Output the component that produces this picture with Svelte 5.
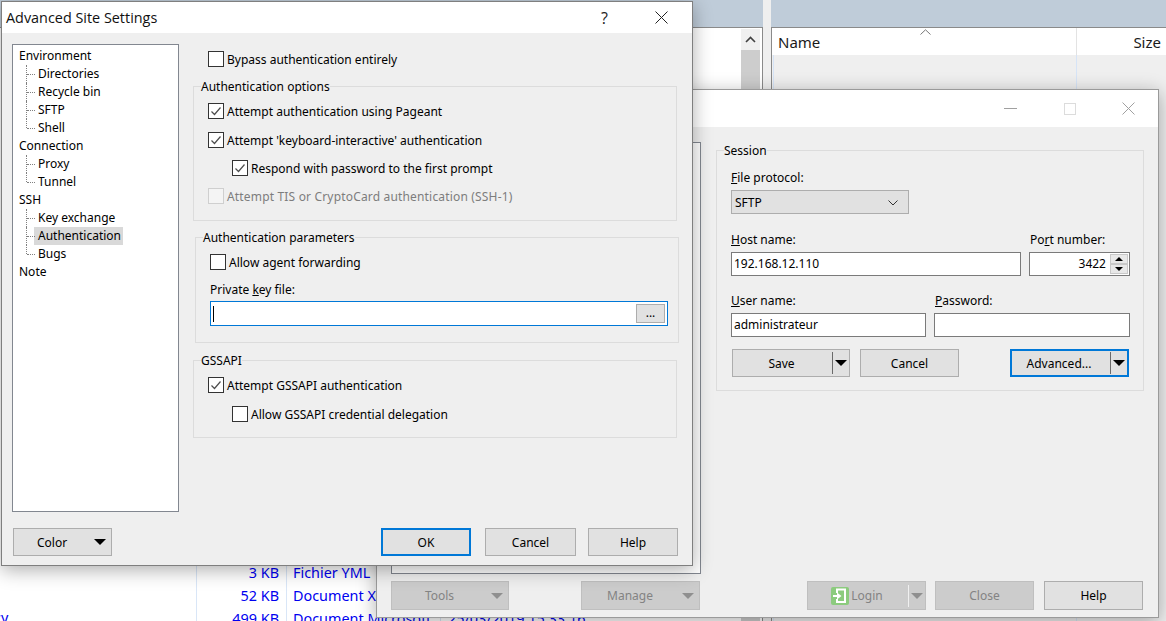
<script>
  const tree = [
    { name: 'Environment', kids: ['Directories', 'Recycle bin', 'SFTP', 'Shell'] },
    { name: 'Connection', kids: ['Proxy', 'Tunnel'] },
    { name: 'SSH', kids: ['Key exchange', 'Authentication', 'Bugs'] },
    { name: 'Note', kids: [] }
  ];

  const files = [
    { size: '3 KB', type: 'Fichier YML', date: '' },
    { size: '52 KB', type: 'Document XML', date: '' },
    { size: '499 KB', type: 'Document Microsoft', date: '25/03/2019 15:33:16' }
  ];
</script>

{#snippet check(label, on = false, cls = '')}
  <div class="check {cls}">
    <span class="box">
      {#if on}
        <svg width="14" height="14" viewBox="0 0 14 14"><path d="M2.5 7.5 L5.5 10.5 L11.5 3.5" fill="none" stroke="#4d4d4d" stroke-width="1.2" /></svg>
      {/if}
    </span>
    <span>{label}</span>
  </div>
{/snippet}

<div class="desktop">
  <div class="pane left-pane">
    <div class="band"></div>
    <div class="scrollbar">
      <div class="scroll-up">
        <svg width="11" height="7" viewBox="0 0 11 7"><path d="M1 6 L5.5 1.5 L10 6" fill="none" stroke="#404040" stroke-width="1.6" /></svg>
      </div>
      <div class="scroll-thumb"></div>
    </div>
    <div class="files">
      {#each files as f}
        <div class="file">
          <span class="file-size">{f.size}</span>
          <span class="file-type">{f.type}</span>
          <span class="file-date">{f.date}</span>
        </div>
      {/each}
    </div>
    <span class="stray">cy</span>
  </div>

  <div class="pane right-pane">
    <div class="band"></div>
    <div class="list-head">
      <span class="col-name">Name</span>
      <svg class="sort" width="11" height="6" viewBox="0 0 11 6"><path d="M0.5 5.5 L5.5 0.8 L10.5 5.5" fill="none" stroke="#777" /></svg>
      <span class="col-size">Size</span>
    </div>
    <div class="list-body"></div>
  </div>

  <!-- login window, sits behind the settings dialog -->
  <section class="window login">
    <header class="titlebar login-bar">
      <svg width="13" height="2" viewBox="0 0 13 2"><rect width="13" height="1" fill="#a0a0a0" /></svg>
      <svg width="12" height="12" viewBox="0 0 12 12"><rect x="0.5" y="0.5" width="11" height="11" fill="none" stroke="#dcdcdc" /></svg>
      <svg width="13" height="13" viewBox="0 0 13 13"><path d="M0.5 0.5 L12.5 12.5 M12.5 0.5 L0.5 12.5" stroke="#a0a0a0" /></svg>
    </header>
    <div class="login-body">
      <div class="login-main">
        <div class="site-tree"></div>
        <fieldset class="group session">
          <legend>Session</legend>
          <label class="field">
            <span><u>F</u>ile protocol:</span>
            <div class="select">
              SFTP
              <svg width="10" height="6" viewBox="0 0 10 6"><path d="M0.5 0.5 L5 5 L9.5 0.5" fill="none" stroke="#333" /></svg>
            </div>
          </label>
          <div class="field-row host-row">
            <label class="field host">
              <span><u>H</u>ost name:</span>
              <div class="input">192.168.12.110</div>
            </label>
            <label class="field port">
              <span class="nudge">Po<u>r</u>t number:</span>
              <div class="input port-input">
                3422
                <div class="spin">
                  <span><i class="tri up"></i></span>
                  <span><i class="tri down"></i></span>
                </div>
              </div>
            </label>
          </div>
          <div class="field-row user-row">
            <label class="field user">
              <span><u>U</u>ser name:</span>
              <div class="input">administrateur</div>
            </label>
            <label class="field pass">
              <span class="nudge"><u>P</u>assword:</span>
              <div class="input"></div>
            </label>
          </div>
          <div class="session-actions">
            <button class="btn split save"><span class="split-label">Save</span><i class="split-sep"></i><i class="tri"></i></button>
            <button class="btn session-cancel">Cancel</button>
            <button class="btn split advanced focus"><span class="split-label">Advanced...</span><i class="split-sep"></i><i class="tri"></i></button>
          </div>
        </fieldset>
      </div>
      <div class="login-actions">
        <button class="btn off tools"><span class="split-label">Tools</span><i class="tri"></i></button>
        <button class="btn off manage"><span class="split-label">Manage</span><i class="tri"></i></button>
        <button class="btn off split do-login">
          <span class="split-label login-label">
            <svg width="18" height="18" viewBox="0 0 18 18">
              <rect width="18" height="18" rx="2" fill="#8ccb7e" />
              <path d="M5 1.5 H15 V16 H5 V12 H7 V14 H13 V3.5 H7 V6 H5 Z" fill="#fff" />
              <path d="M2 8 H6 V5.5 L10.5 9 L6 12.5 V10 H2 Z" fill="#fff" />
            </svg>
            Login
          </span>
          <i class="split-sep light"></i><i class="tri"></i>
        </button>
        <button class="btn off close">Close</button>
        <button class="btn help">Help</button>
      </div>
    </div>
  </section>

  <section class="window settings">
    <header class="titlebar">
      <h1>Advanced Site Settings</h1>
      <span class="help-mark">?</span>
      <svg width="13" height="13" viewBox="0 0 13 13"><path d="M0.5 0.5 L12.5 12.5 M12.5 0.5 L0.5 12.5" stroke="#222" /></svg>
    </header>
    <div class="settings-body">
      <div class="settings-main">
        <nav class="tree">
          {#each tree as node}
            <div class="root">{node.name}</div>
            {#each node.kids as kid, i}
              <div class="kid" class:last={i === node.kids.length - 1}>
                <span class:selected={kid === 'Authentication'}>{kid}</span>
              </div>
            {/each}
          {/each}
        </nav>
        <div class="panel">
          {@render check('Bypass authentication entirely', false, 'bypass')}
          <fieldset class="group options">
            <legend>Authentication options</legend>
            {@render check('Attempt authentication using Pageant', true, 'first')}
            {@render check("Attempt 'keyboard-interactive' authentication", true)}
            {@render check('Respond with password to the first prompt', true, 'sub')}
            {@render check('Attempt TIS or CryptoCard authentication (SSH-1)', false, 'disabled')}
          </fieldset>
          <fieldset class="group params">
            <legend>Authentication parameters</legend>
            {@render check('Allow agent forwarding')}
            <div class="key-label">Private <u>k</u>ey file:</div>
            <div class="key-input">
              <i class="caret"></i>
              <span class="browse">...</span>
            </div>
          </fieldset>
          <fieldset class="group gss">
            <legend>GSSAPI</legend>
            {@render check('Attempt GSSAPI authentication', true, 'first')}
            {@render check('Allow GSSAPI credential delegation', false, 'sub')}
          </fieldset>
        </div>
      </div>
      <div class="settings-actions">
        <button class="btn color"><span>Color</span><i class="tri"></i></button>
        <div class="spacer"></div>
        <button class="btn ok focus">OK</button>
        <button class="btn cancel">Cancel</button>
        <button class="btn help2">Help</button>
      </div>
    </div>
  </section>
</div>

<style>
  :global(body) {
    margin: 0;
    overflow: hidden;
  }

  .desktop {
    position: relative;
    width: 1166px;
    height: 621px;
    overflow: hidden;
    background: #efefef;
    font-family: "Noto Sans", Tahoma, sans-serif;
    font-size: 12px;
    color: #000;
  }

  /* background panes */
  .pane {
    position: absolute;
    top: 0;
    height: 621px;
    background: #fff;
  }

  .left-pane {
    left: 0;
    width: 763px;
    border-right: 1px solid #8a8a8a;
    box-sizing: border-box;
  }

  .right-pane {
    left: 771px;
    width: 395px;
    border-left: 1px solid #8a8a8a;
    box-sizing: border-box;
  }

  .band {
    height: 27px;
    background: #bfccd9;
    border-bottom: 1px solid #8a8a8a;
    box-sizing: content-box;
  }

  .left-pane .band {
    margin-right: -1px;
  }

  .right-pane .band {
    margin-left: -1px;
  }

  .scrollbar {
    position: absolute;
    top: 29px;
    left: 741px;
    width: 19px;
    bottom: 0;
    display: flex;
    flex-direction: column;
  }

  .scroll-up {
    height: 21px;
    background: #f0f0f0;
    display: flex;
    align-items: center;
    justify-content: center;
  }

  .scroll-thumb {
    flex: 1;
    background: #cdcdcd;
  }

  .files {
    position: absolute;
    left: 196px;
    top: 561px;
    width: 400px;
    height: 70px;
    border-left: 1px solid #d9e6f7;
    font-size: 14.4px;
    color: #0000f0;
  }

  .file {
    display: flex;
    height: 23px;
    line-height: 23px;
    white-space: nowrap;
  }

  .file-size {
    flex: none;
    width: 82px;
    text-align: right;
  }

  .file-type {
    flex: none;
    width: 154px;
    box-sizing: border-box;
    margin-left: 7px;
    padding-left: 6px;
    border-left: 1px solid #d9e6f7;
    overflow: hidden;
  }

  .file-date {
    flex: none;
    padding-left: 7px;
    border-left: 1px solid #d9e6f7;
  }

  .stray {
    position: absolute;
    left: -6px;
    top: 608px;
    font-size: 14.4px;
    color: #0000f0;
  }

  .list-head {
    position: relative;
    height: 27px;
    font-size: 15px;
    line-height: 29px;
    color: #1a1a1a;
    border-right: 0;
  }

  .col-name {
    position: absolute;
    left: 6px;
  }

  .sort {
    position: absolute;
    left: 148px;
    top: 1px;
  }

  .col-size {
    position: absolute;
    right: 5px;
    padding-left: 0;
  }

  .list-head::after {
    content: "";
    position: absolute;
    left: 304px;
    top: 0;
    bottom: 0;
    width: 1px;
    background: #e3e3e3;
  }

  .list-body {
    position: absolute;
    top: 55px;
    bottom: 0;
    left: 0;
    right: 0;
    background: linear-gradient(#d6e4f7, #d6e4f7) 1px 0 / 1px 100% no-repeat,
      linear-gradient(#d6e4f7, #d6e4f7) 304px 0 / 1px 100% no-repeat,
      #efefef;
  }

  /* windows */
  .window {
    position: absolute;
    box-sizing: border-box;
    background: #efefef;
    border: 1px solid #7f7f7f;
    display: flex;
    flex-direction: column;
    box-shadow: 0 4px 18px rgba(0, 0, 0, 0.32);
  }

  .settings {
    left: 1px;
    top: 1px;
    width: 692px;
    height: 565px;
  }

  .login {
    left: 376px;
    top: 89px;
    width: 783px;
    height: 529px;
    border-color: #9a9a9a;
  }

  .titlebar {
    height: 31px;
    flex: none;
    background: #fff;
    display: flex;
    align-items: center;
    padding: 0 24px 0 4px;
  }

  .titlebar h1 {
    flex: 1;
    margin: 0;
    font-family: "Open Sans", sans-serif;
    font-size: 14.4px;
    font-weight: 400;
    color: #111;
  }

  .help-mark {
    width: 10px;
    margin-right: 44px;
    font-family: "Open Sans", sans-serif;
    font-size: 16px;
    color: #222;
  }

  .login-bar {
    height: 37px;
    justify-content: flex-end;
    padding: 0 23px 0 0;
    gap: 0;
  }

  .login-bar svg:nth-child(1) {
    margin-right: 47px;
  }

  .login-bar svg:nth-child(2) {
    margin-right: 46px;
  }

  /* settings dialog */
  .settings-body {
    flex: 1;
    display: flex;
    flex-direction: column;
    padding: 11px 14px 9px 10px;
  }

  .settings-main {
    flex: 1;
    display: flex;
  }

  .tree {
    width: 167px;
    height: 468px;
    box-sizing: border-box;
    flex: none;
    background: #fff;
    border: 1px solid #828790;
    padding: 2px 0 0 6px;
    line-height: 18px;
  }

  .root {
    height: 18px;
  }

  .kid {
    position: relative;
    height: 18px;
    padding-left: 19px;
  }

  .kid span {
    display: inline-block;
    padding: 0 1px 0 0;
  }

  .kid span.selected {
    background: #d9d9d9;
    margin-left: -4px;
    padding: 0 2px 0 4px;
  }

  .kid::before {
    content: "";
    position: absolute;
    left: 7px;
    top: 0;
    height: 18px;
    border-left: 1px dotted #808080;
  }

  .kid.last::before {
    height: 9px;
  }

  .kid::after {
    content: "";
    position: absolute;
    left: 8px;
    top: 9px;
    width: 8px;
    border-top: 1px dotted #808080;
  }

  .panel {
    flex: 1;
    margin-left: 14px;
    display: flex;
    flex-direction: column;
    align-items: flex-start;
  }

  .check {
    display: flex;
    align-items: center;
    height: 28px;
    gap: 3px;
    white-space: nowrap;
  }

  .check.first {
    margin-bottom: 1px;
  }

  .box {
    width: 14px;
    height: 14px;
    border: 1px solid #333;
    background: #fff;
    flex: none;
    display: block;
  }

  .box svg {
    display: block;
  }

  .check.sub {
    margin-left: 24px;
  }

  .check.disabled {
    color: #7d7d7d;
    letter-spacing: 0.17px;
  }

  .check.disabled .box {
    border-color: #cfcfcf;
    background: #f4f4f4;
  }

  .bypass {
    margin-left: 15px;
    margin-top: 1px;
  }

  .group {
    margin: 0;
    padding: 0;
    min-width: 0;
    border: 1px solid #dcdcdc;
    box-sizing: border-box;
  }

  .group legend {
    padding: 0;
    margin-left: -7px;
    line-height: 16px;
    height: 14px;
  }

  .options {
    width: 484px;
    height: 142px;
    margin-top: 6px;
    padding: 4px 0 0 14px;
  }

  .params {
    width: 484px;
    height: 113px;
    margin: 9px 0 0 2px;
    padding: 4px 0 0 14px;
  }

  .gss {
    width: 484px;
    height: 85px;
    margin-top: 10px;
    padding: 4px 0 0 14px;
  }

  .key-label {
    margin-top: 6px;
    height: 16px;
    line-height: 16px;
  }

  .key-input {
    width: 458px;
    height: 25px;
    box-sizing: border-box;
    margin-top: 3px;
    border: 1px solid #0078d7;
    background: #fff;
    display: flex;
    align-items: center;
    justify-content: space-between;
    padding: 0 2px 0 2px;
  }

  .caret {
    width: 1px;
    height: 16px;
    background: #000;
  }

  .browse {
    width: 29px;
    height: 19px;
    box-sizing: border-box;
    background: #e1e1e1;
    border: 1px solid #adadad;
    text-align: center;
    line-height: 15px;
  }

  .settings-actions {
    display: flex;
    align-items: flex-start;
    flex: none;
  }

  .spacer {
    flex: 1;
  }

  /* buttons */
  .btn {
    display: flex;
    align-items: center;
    justify-content: center;
    box-sizing: border-box;
    padding: 0;
    height: 28px;
    font: inherit;
    background: #e1e1e1;
    border: 1px solid #adadad;
    color: #000;
  }

  .btn.focus {
    border: 2px solid #0078d7;
  }

  .btn.off {
    background: #cccccc;
    border-color: #bfbfbf;
    color: #838383;
  }

  .tri {
    display: block;
    width: 0;
    height: 0;
    border-left: 6px solid transparent;
    border-right: 6px solid transparent;
    border-top: 6px solid #000;
    flex: none;
  }

  .btn.off .tri {
    border-top-color: #8f8f8f;
  }

  .color {
    width: 99px;
    margin-left: 1px;
    padding: 0 5px 0 23px;
    justify-content: space-between;
  }

  .ok {
    width: 90px;
  }

  .cancel {
    width: 91px;
    margin-left: 14px;
  }

  .help2 {
    width: 90px;
    margin-left: 12px;
  }

  /* login window */
  .login-body {
    flex: 1;
    display: flex;
    flex-direction: column;
    padding: 15px 14px 7px 14px;
  }

  .login-main {
    flex: 1;
    display: flex;
    align-items: flex-start;
  }

  .site-tree {
    width: 310px;
    height: 432px;
    box-sizing: border-box;
    flex: none;
    background: #fff;
    border: 1px solid #828790;
  }

  .session {
    width: 428px;
    height: 248px;
    margin: 1px 0 0 15px;
    padding: 13px 0 0 14px;
  }

  .field {
    display: block;
    line-height: 16px;
  }

  .nudge {
    padding-left: 1px;
  }

  .select {
    width: 178px;
    height: 24px;
    margin-top: 4px;
    box-sizing: border-box;
    background: #e1e1e1;
    border: 1px solid #adadad;
    padding: 1px 10px 0 3px;
    display: flex;
    align-items: center;
    justify-content: space-between;
  }

  .field-row {
    display: flex;
  }

  .host-row {
    margin-top: 18px;
  }

  .user-row {
    margin-top: 17px;
  }

  .input {
    height: 24px;
    margin-top: 4px;
    box-sizing: border-box;
    background: #fff;
    border: 1px solid #7a7a7a;
    padding: 0 2px;
    line-height: 21px;
  }

  .host {
    width: 290px;
  }

  .port {
    width: 101px;
    margin-left: 8px;
  }

  .port-input {
    position: relative;
    text-align: right;
    padding-right: 23px;
  }

  .spin {
    position: absolute;
    right: 1px;
    top: 1px;
    width: 18px;
    display: flex;
    flex-direction: column;
    gap: 0;
  }

  .spin span {
    height: 10px;
    background: #e8e8e8;
    border: 1px solid #c8c8c8;
    box-sizing: border-box;
    display: flex;
    align-items: center;
    justify-content: center;
  }

  .spin .tri {
    border-left-width: 4px;
    border-right-width: 4px;
    border-top-width: 4px;
  }

  .spin .tri.up {
    border-top: 0;
    border-bottom: 4px solid #000;
  }

  .user {
    width: 195px;
  }

  .pass {
    width: 196px;
    margin-left: 8px;
  }

  .session-actions {
    display: flex;
    margin-top: 12px;
    margin-left: 1px;
  }

  .split {
    padding: 0 2px 0 0;
  }

  .split-label {
    flex: 1;
    text-align: center;
  }

  .split-sep {
    width: 1px;
    height: 22px;
    background: #6a6a6a;
    margin-right: 2px;
  }

  .split-sep.light {
    background: #f0f0f0;
  }

  .save {
    width: 118px;
  }

  .save .split-label {
    padding-right: 2px;
  }

  .session-cancel {
    width: 99px;
    margin-left: 10px;
  }

  .advanced {
    width: 119px;
    margin-left: 51px;
  }

  .advanced .split-label {
    padding-right: 4px;
  }

  .login-actions {
    display: flex;
    flex: none;
  }

  .login-actions .btn {
    height: 29px;
  }

  .tools {
    width: 118px;
    padding-right: 5px;
  }

  .tools .split-label {
    margin-right: 4px;
  }

  .manage {
    width: 119px;
    margin-left: 72px;
    padding-right: 5px;
  }

  .manage .split-label {
    margin-right: 4px;
  }

  .do-login {
    width: 119px;
    margin-left: 107px;
  }

  .login-label {
    display: flex;
    align-items: center;
    justify-content: center;
    gap: 2px;
    padding-right: 2px;
  }

  .close {
    width: 99px;
    margin-left: 9px;
  }

  .help {
    width: 99px;
    margin-left: 10px;
  }
</style>
